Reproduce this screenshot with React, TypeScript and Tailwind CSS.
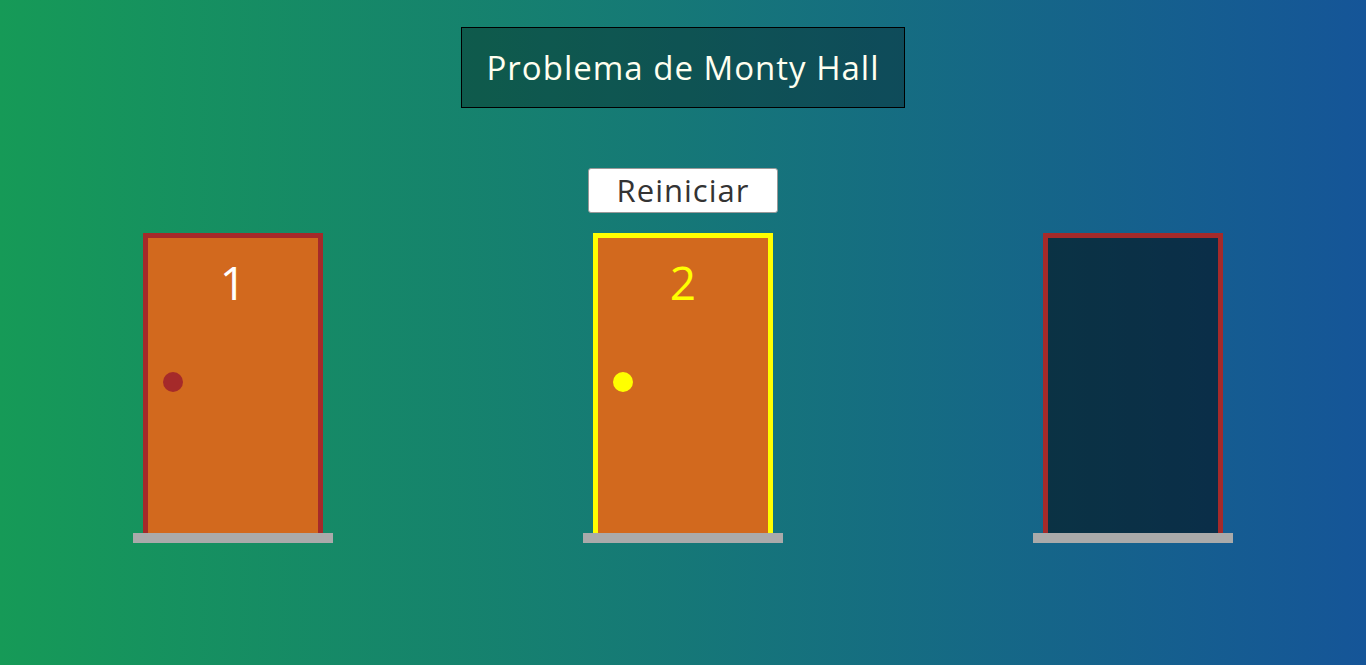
import React from 'react';

type DoorProps = {
    num?: number;
    selected?: boolean;
    open?: boolean;
};

function Door({ num, selected, open }: DoorProps) {
    const border = selected ? 'border-[#ffff00]' : 'border-[#a52a2a]';
    return (
        <div className="w-[450px] flex flex-col items-center">
            {open ? (
                <div className={`w-[180px] h-[300px] border-[5px] border-b-0 ${border} bg-black/50`} />
            ) : (
                <div className={`w-[180px] h-[300px] border-[5px] border-b-0 ${border} bg-[#d2691e] flex flex-col`}>
                    <div
                        className={`mt-[16px] h-[56px] text-center text-[46px] leading-[56px] ${selected ? 'text-[#ffff00]' : 'text-white'}`}
                    >
                        {num}
                    </div>
                    <div className="mt-[62px] ml-[15px]">
                        <div className={`w-[20px] h-[20px] rounded-full ${selected ? 'bg-[#ffff00]' : 'bg-[#a52a2a]'}`} />
                    </div>
                </div>
            )}
            <div className="w-[200px] h-[10px] bg-[#aaaaaa]" />
        </div>
    );
}

export default function App() {
    const doors: DoorProps[] = [
        { num: 1 },
        { num: 2, selected: true },
        { num: 3, open: true },
    ];

    return (
        <div
            className="w-full h-[665px] bg-[linear-gradient(to_right,#169a57,#155598)] flex flex-col items-center"
            style={{ fontFamily: '"Open Sans", "DejaVu Sans", sans-serif' }}
        >
            <div className="mt-[27px] w-[444px] h-[81px] border border-black bg-black/30 flex items-center justify-center">
                <h1 className="text-[33px] text-[#fffff0] tracking-[1px]">Problema de Monty Hall</h1>
            </div>

            <button className="mt-[60px] w-[190px] h-[45px] bg-white rounded-[3px] border border-[#999] text-[31px] leading-none text-[#333] tracking-[1px]">
                Reiniciar
            </button>

            <div className="mt-[20px] flex justify-center">
                {doors.map((d, i) => (
                    <Door key={i} {...d} />
                ))}
            </div>
        </div>
    );
}
